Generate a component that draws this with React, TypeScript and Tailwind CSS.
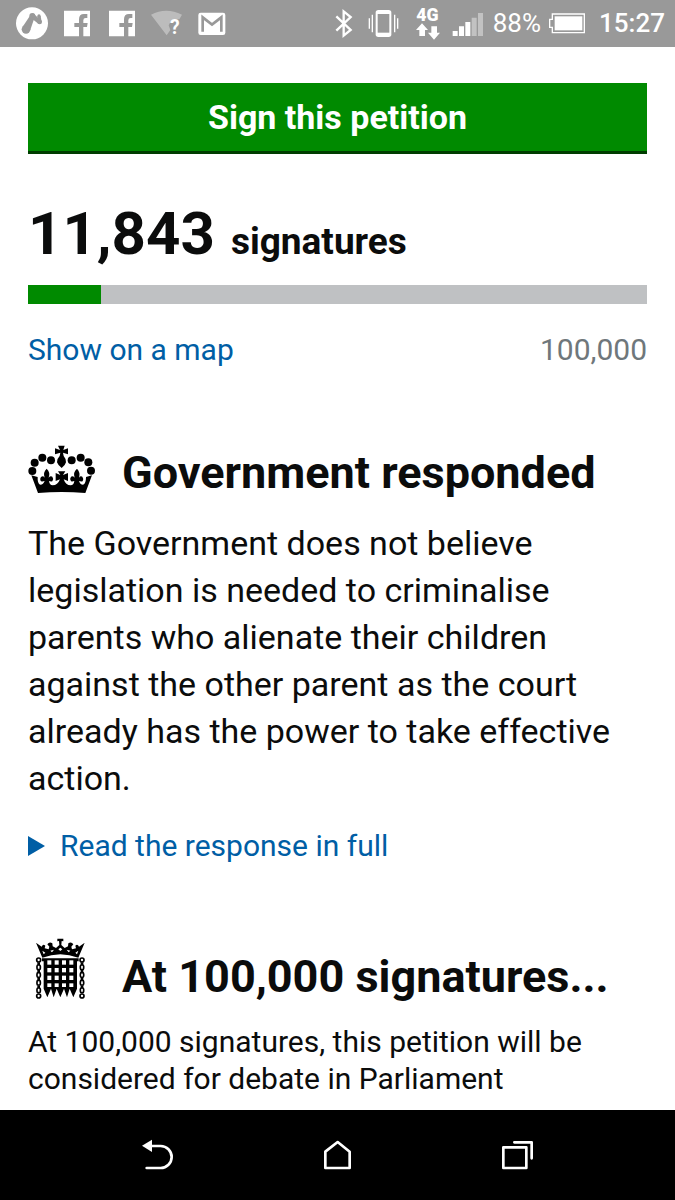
import React, { useState } from 'react';

interface StatusIconProps {
  label: string;
  className: string;
  viewBox: string;
  children: React.ReactNode;
}

const StatusIcon: React.FC<StatusIconProps> = ({ label, className, viewBox, children }) => (
  <svg role="img" aria-label={label} className={`h-[47px] shrink-0 fill-white ${className}`} viewBox={viewBox}>
    {children}
  </svg>
);

const FacebookIcon: React.FC = () => (
  <StatusIcon label="Facebook" className="w-[26px]" viewBox="192 0 78 141">
    <path d="M192 32H270V109H250V81H261L263 69H250V61Q250 54 257 54H262V42H252Q237 42 237 58V69H223V81H237V109H192Z" />
  </StatusIcon>
);

const StatusBar: React.FC = () => (
  <header className="flex h-[47px] items-center justify-between bg-[#999999] pl-4 pr-[10px] text-[26px] leading-[47px] text-white">
    <div className="flex items-center">
      <StatusIcon label="Music" className="mr-4 w-8" viewBox="48 0 96 141">
        <circle cx="96" cy="70" r="48" />
        <g className="fill-[#999999]">
          <circle cx="78" cy="88" r="13" />
          <circle cx="97" cy="48" r="9" />
          <circle cx="119" cy="66" r="7" />
          <circle cx="117" cy="48" r="5" />
          <path d="M69 79L89 49L104 52L90 92Z" />
          <path d="M100 40L125 64L115 71L96 56Z" />
          <path d="M112 48H122L125 66H115Z" />
        </g>
      </StatusIcon>
      <div className="mr-4 flex gap-[19px]">
        <FacebookIcon />
        <FacebookIcon />
      </div>
      <StatusIcon label="Wi-Fi available" className="mr-[15px] w-8" viewBox="455 0 96 141">
        <path fillOpacity="0.35" d="M455 44Q500 20 548 44L540 58Q515 56 508 76L513 90L502 106Z" />
        <text x="512" y="102" fontSize="58" fontWeight="700">?</text>
      </StatusIcon>
      <StatusIcon label="Gmail" className="w-7" viewBox="594 0 84 141">
        <rect x="595" y="38" width="81" height="67" rx="7" />
        <path fill="none" stroke="#999999" strokeWidth="8" d="M608 95V52L636 74L664 52V95" />
      </StatusIcon>
    </div>

    <div className="flex items-center">
      <StatusIcon label="Bluetooth" className="mr-[15px] w-[18px]" viewBox="45 0 54 141">
        <path fill="none" stroke="white" strokeWidth="7" d="M49 49L92 90L71 107V34L92 51L49 92" />
      </StatusIcon>
      <StatusIcon label="Vibrate" className="mr-[17px] w-[31px]" viewBox="144 0 93 141">
        <rect x="167" y="30" width="47" height="81" rx="8" />
        <rect x="173" y="42" width="35" height="56" className="fill-[#999999]" />
        <path fill="none" stroke="white" strokeWidth="4" d="M148 55V86M157 44V97M224 44V97M233 55V86" />
      </StatusIcon>
      <StatusIcon label="4G data" className="mr-3 w-6" viewBox="287 0 72 141">
        <text x="288" y="62" fontSize="53" fontWeight="900">4G</text>
        <path d="M305 70L323 90H314V108H297V90H287ZM333 79H350V98H359L341 119L323 98H333Z" />
      </StatusIcon>
      <StatusIcon label="Signal strength" className="mr-[9px] w-8" viewBox="394 0 96 141">
        <path d="M396 93H411V108H396ZM415 79H430V108H415ZM434 66H449V108H434Z" />
        <path fillOpacity="0.4" d="M453 53H468V108H453ZM472 39H487V108H472Z" />
      </StatusIcon>
      <span className="mr-2">88%</span>
      <StatusIcon label="Battery" className="mr-[14px] w-9" viewBox="688 0 108 141">
        <path fill="none" stroke="white" strokeWidth="4" d="M698 42H794V98H698V82H690V58H698Z" />
        <rect x="705" y="49" width="83" height="42" />
      </StatusIcon>
      <time className="font-medium">15:27</time>
    </div>
  </header>
);

const CROWN_PEARLS = [
  [53, 108], [60, 83], [83, 68], [109, 76],
  [171, 76], [198, 68], [221, 82], [229, 107],
];

const CrownIcon: React.FC = () => (
  <svg aria-hidden="true" className="h-[49px] w-[67px]" viewBox="40 30 201 147">
    {CROWN_PEARLS.map(([cx, cy]) => (
      <circle key={cx} cx={cx} cy={cy} r="12" />
    ))}
    <path d="M130 32H150L146 45L160 40V58L145 53L147 63Q155 72 154 82Q152 91 141 99Q130 91 127 82Q126 72 135 63L137 53L121 58V40L136 45Z" />
    <path d="M70 174L50 121L69 126Q68 147 77 149Q86 149 90 138Q84 140 79 139Q74 131 80 125Q86 122 90 128Q84 112 96 101Q108 112 102 128Q107 122 113 125Q118 131 113 139Q108 140 103 138Q105 151 114 151Q129 151 136 133L123 138V114L137 120L130 109H152L145 120L160 114V138L147 133Q153 151 168 151Q177 151 179 138Q174 140 169 139Q164 131 169 125Q175 122 180 128Q174 112 187 101Q198 112 193 128Q197 122 203 125Q208 131 204 139Q198 140 193 138Q196 149 205 149Q214 147 214 126L232 121L212 174Q141 168 70 174Z" />
  </svg>
);

const GRID_COLUMNS = [82, 104, 126, 148];
const GRID_ROWS = [107, 130, 153];
const CHAIN_LINKS = [121, 144, 167, 190];

const PortcullisIcon: React.FC = () => (
  <svg aria-hidden="true" className="h-[61px] w-[50px]" viewBox="45 40 150 183">
    <path d="M67 99L48 54L65 66Q69 57 76 63L74 71L86 74L88 66L82 59Q88 50 97 56L98 65L108 70L118 61L117 49L112 50V42H130V50L125 49L124 61L134 70L144 65L145 56Q154 50 160 59L154 66L156 74L168 71L166 63Q173 57 177 66L194 54L175 99Q121 78 67 99Z" />
    <path fill="white" d="M67 78L76 84L71 89ZM91 78L102 75L96 83ZM115 74L121 69L127 74L121 79ZM151 78L140 75L146 83ZM175 78L166 84L171 89Z" />
    <path d="M66 101H176V110H171V192L160 218L149 192L141 218L132 192L121 218L110 192L101 218L93 192L82 218L71 192V110H66Z" />
    {GRID_ROWS.map((y) =>
      GRID_COLUMNS.map((x) => <rect key={`${x}-${y}`} x={x} y={y} width="12" height="13" fill="white" />),
    )}
    {GRID_COLUMNS.map((x) => (
      <rect key={x} x={x} y="176" width="12" height="11" fill="white" />
    ))}
    {[56, 186].map((cx) => (
      <g key={cx} fill="none" stroke="black" strokeWidth="5">
        <circle cx={cx} cy="106" r="6" />
        {CHAIN_LINKS.map((y) => (
          <g key={y}>
            <rect x={cx - 5} y={y} width="10" height="14" rx="4" />
            <path d={`M${cx} ${y - 8}V${y}`} strokeWidth="8" />
          </g>
        ))}
        <circle cx={cx} cy="214" r="6" />
      </g>
    ))}
  </svg>
);

interface SectionHeadingProps {
  icon: React.ReactNode;
  title: string;
}

const SectionHeading: React.FC<SectionHeadingProps> = ({ icon, title }) => (
  <div className="flex items-end">
    <div className="flex w-[94px] shrink-0 self-start">{icon}</div>
    <h2 className="text-[45px] font-bold leading-[55px]">{title}</h2>
  </div>
);

const SignatureCount: React.FC<{ count: number; target: number }> = ({ count, target }) => (
  <section className="mt-[50px]">
    <h1 className="flex items-baseline gap-4 text-[37px] font-bold leading-none">
      <span className="text-[60px] leading-[60px]">{count.toLocaleString('en-GB')}</span>
      <span>signatures</span>
    </h1>
    <div
      role="progressbar"
      aria-label="Signatures"
      aria-valuenow={count}
      aria-valuemax={target}
      className="mt-[21px] h-[19px] bg-[#bfc1c3]"
    >
      <div className="h-full bg-[#008a00]" style={{ width: `${(count / target) * 100}%` }} />
    </div>
    <div className="mt-[27px] flex justify-between text-[30px] leading-[38px]">
      <a href="#map" className="text-[#005ea5]">Show on a map</a>
      <span className="text-[#6f777b]">{target.toLocaleString('en-GB')}</span>
    </div>
  </section>
);

const GovernmentResponse: React.FC = () => {
  const [open, setOpen] = useState(false);

  return (
    <section className="mt-[76px]">
      <SectionHeading icon={<CrownIcon />} title="Government responded" />
      <p className="mt-5 text-[34px] leading-[47px]">
        The Government does not believe legislation is needed to criminalise parents who alienate their
        children against the other parent as the court already has the power to take effective action.
      </p>
      <button
        type="button"
        aria-expanded={open}
        onClick={() => setOpen(!open)}
        className="mt-[25px] flex items-center gap-[15px] text-[30px] leading-[38px] text-[#005ea5]"
      >
        <svg aria-hidden="true" className={`h-5 w-[17px] fill-current ${open ? 'rotate-90' : ''}`} viewBox="0 0 17 20">
          <path d="M0 0L17 10L0 20Z" />
        </svg>
        Read the response in full
      </button>
    </section>
  );
};

const NavigationBar: React.FC = () => (
  <nav className="flex h-[90px] items-center justify-center gap-[144px] bg-black text-white">
    <button type="button" aria-label="Back">
      <svg className="h-9 w-9" viewBox="60 51 108 108" fill="none" stroke="currentColor" strokeWidth="8" strokeLinecap="round">
        <path d="M92 78H122A33 33 0 0 1 122 144H80" />
        <path d="M66 77L96 59V96Z" fill="currentColor" stroke="none" />
      </svg>
    </button>
    <button type="button" aria-label="Home">
      <svg className="h-9 w-9" viewBox="600 51 108 108" fill="none" stroke="currentColor" strokeWidth="8" strokeLinejoin="round">
        <path d="M616 144V95L653 66L689 95V144Z" />
      </svg>
    </button>
    <button type="button" aria-label="Recent apps">
      <svg className="h-9 w-9" viewBox="1140 51 108 108" fill="none" stroke="currentColor" strokeWidth="8" strokeLinecap="round" strokeLinejoin="round">
        <path d="M1150 82H1219V144H1150Z" />
        <path d="M1183 67H1235V115" />
      </svg>
    </button>
  </nav>
);

export default function App() {
  return (
    <div className="flex min-h-screen flex-col bg-white font-['Roboto',sans-serif] text-[#0b0c0c]">
      <StatusBar />
      <main className="flex-1 px-7 pt-9">
        <button
          type="button"
          className="block h-[71px] w-full border-b-[3px] border-[#003d00] bg-[#008a00] text-[34px] font-bold text-white"
        >
          Sign this petition
        </button>
        <SignatureCount count={11843} target={100000} />
        <GovernmentResponse />
        <section className="mt-[73px]">
          <SectionHeading
            icon={<div className="mb-[5px] ml-[7px]"><PortcullisIcon /></div>}
            title="At 100,000 signatures..."
          />
          <p className="mt-[19px] text-[30px] leading-[37px]">
            At 100,000 signatures, this petition will be considered for debate in Parliament
          </p>
        </section>
      </main>
      <NavigationBar />
    </div>
  );
}
